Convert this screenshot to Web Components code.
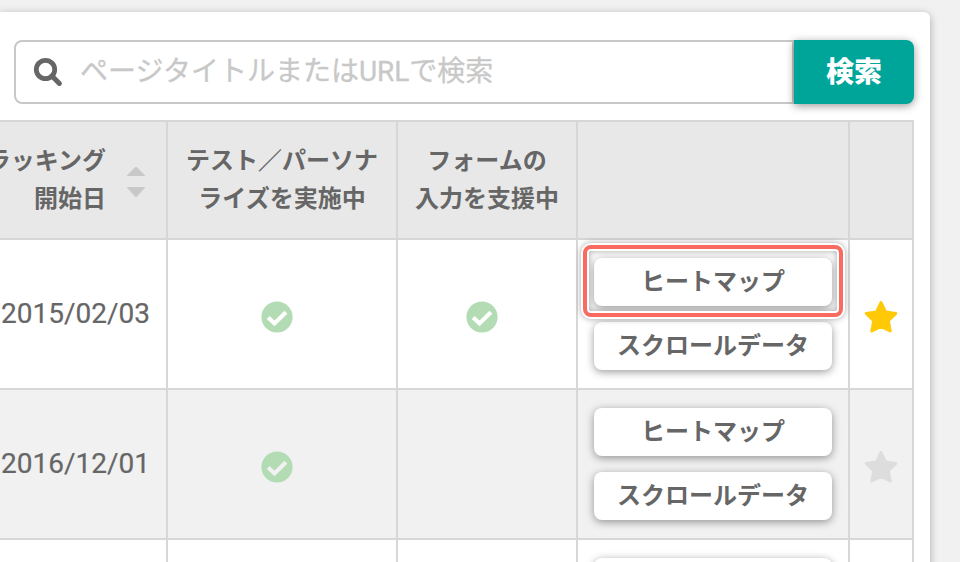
<!DOCTYPE html>
<html lang="ja">
  <head>
    <meta charset="UTF-8" />
    <title>ページ一覧</title>
    <style>
      body {
        margin: 0;
        height: 562px;
        overflow: hidden;
        background: #f1f1f1;
        color: #666;
        font-family: Roboto, "Noto Sans CJK JP", sans-serif;
      }
    </style>
    <script>
      const define = (name, html) => {
        customElements.define(
          name,
          class extends HTMLElement {
            constructor() {
              super();
              this.attachShadow({ mode: "open" }).innerHTML = html;
            }
          }
        );
      };

      define(
        "page-panel",
        `
        <style>
          :host {
            display: flex;
            flex-direction: column;
            gap: 16px;
            box-sizing: border-box;
            width: 930px;
            height: 700px;
            margin-top: 12px;
            padding: 28px 16px 0 0;
            background: #fff;
            border-radius: 0 6px 0 0;
            box-shadow: 0 2px 8px rgba(0, 0, 0, 0.3);
          }
        </style>
        <slot></slot>
        `
      );

      define(
        "search-bar",
        `
        <style>
          :host {
            display: flex;
            flex-shrink: 0;
            height: 64px;
            margin-left: 14px;
          }
          .field {
            display: flex;
            flex: 1;
            align-items: center;
            gap: 17px;
            padding-left: 17px;
            border: 2px solid #c8c8c8;
            border-radius: 8px 0 0 8px;
            color: #c8c8c8;
            font-size: 28px;
            line-height: 60px;
          }
          .field span {
            margin-top: -1px;
            -webkit-text-stroke: 0.3px;
          }
          button {
            width: 120px;
            padding: 0 0 4px;
            border: 0;
            border-radius: 0 8px 8px 0;
            background: #00a59a;
            box-shadow: 0 2px 8px rgba(0, 0, 0, 0.4);
            color: #fff;
            font: 900 28px Roboto, "Noto Sans CJK JP", sans-serif;
          }
        </style>
        <div class="field">
          <svg width="30" height="30" viewBox="0 0 30 30" fill="none" stroke="#666">
            <circle cx="12.5" cy="12.5" r="9.2" stroke-width="4.8" />
            <path d="M19 19l7.400 7.400" stroke-width="5" stroke-linecap="round" />
          </svg>
          <span><slot></slot></span>
        </div>
        <button type="button">検索</button>
        `
      );

      define(
        "page-table",
        `
        <style>
          :host {
            display: block;
            border: solid #d7d7d7;
            border-width: 2px 2px 0 0;
          }
        </style>
        <slot></slot>
        `
      );

      define(
        "table-row",
        `
        <style>
          :host {
            display: grid;
            grid-template-columns: 166px 228px 178px 270px 62px;
            column-gap: 2px;
            height: 148px;
            border-bottom: 2px solid #d7d7d7;
            background: #d7d7d7;
            --cell: #fff;
          }
          :host([striped]) {
            --cell: #f1f1f1;
          }
          :host([head]) {
            height: 116px;
            --cell: #e8e8e8;
          }
        </style>
        <slot></slot>
        `
      );

      define(
        "table-cell",
        `
        <style>
          :host {
            display: flex;
            flex-direction: column;
            align-items: center;
            justify-content: center;
            gap: 16px;
            background: var(--cell);
            font-size: 28px;
            min-width: 0;
          }
          :host([date]) {
            align-items: flex-end;
            padding-right: 16px;
          }
        </style>
        <slot></slot>
        `
      );

      define(
        "head-label",
        `
        <style>
          :host {
            display: block;
            font-size: 24px;
            font-weight: 700;
            line-height: 38px;
            text-align: center;
            white-space: nowrap;
          }
          :host([sortable]) {
            display: flex;
            align-items: center;
            gap: 20px;
            text-align: right;
            margin-right: 4px;
          }
          svg {
            display: none;
          }
          :host([sortable]) svg {
            display: block;
            margin-top: 4px;
          }
        </style>
        <div><slot></slot></div>
        <svg width="20" height="32" viewBox="0 0 20 32" fill="#c8c8c8">
          <path d="M.5 10L9 1.2q1-1 2 0L19.500 10zM.5 21h19L11 30.500q-1 1-2 0z" />
        </svg>
        `
      );

      define(
        "date-text",
        `
        <style>
          :host {
            display: block;
            line-height: 38px;
            -webkit-text-stroke: 0.2px;
          }
        </style>
        <slot></slot>
        `
      );

      define(
        "check-mark",
        `
        <style>
          :host {
            display: block;
            height: 32px;
            margin: 6px 11px 0 0;
          }
          path {
            stroke: var(--cell);
          }
        </style>
        <svg width="32" height="32" viewBox="0 0 32 32">
          <circle cx="16" cy="16" r="15.600" fill="#b3dcb5" />
          <path d="M7.200 16.400l6.300 6L24.900 11.200" fill="none" stroke-width="4.200" />
        </svg>
        `
      );

      define(
        "star-mark",
        `
        <style>
          :host {
            display: block;
            height: 34px;
            margin-top: 6px;
            color: #ddd;
          }
          :host([on]) {
            color: #ffc907;
          }
        </style>
        <svg width="34" height="34" viewBox="0 0 34 34">
          <path
            d="M17 2.600l4.500 9.300 10.300 1.500-7.500 7.300 1.900 10.300L17 26.300l-9.200 4.700 1.900-10.300-7.500-7.300 10.300-1.500z"
            fill="currentColor" stroke="currentColor" stroke-width="3" stroke-linejoin="round"
          />
        </svg>
        `
      );

      define(
        "link-button",
        `
        <style>
          :host {
            display: block;
            position: relative;
            width: 238px;
            height: 48px;
          }
          button {
            display: block;
            width: 100%;
            height: 100%;
            padding: 0 0 5px;
            border: 0;
            border-radius: 8px;
            background: #fff;
            box-shadow: 0 2px 8px rgba(0, 0, 0, 0.4);
            color: #666;
            font: 700 24px Roboto, "Noto Sans CJK JP", sans-serif;
            white-space: nowrap;
          }
          /* red frame over the button */
          :host([marked])::after {
            content: "";
            position: absolute;
            z-index: 1;
            inset: -13px -11px -11px;
            border: 4px solid #f96a61;
            border-radius: 8px;
            box-shadow: 0 0 0 2px #fff, 0 0 6px 2px rgba(0, 0, 0, 0.35),
              inset 0 0 0 2px #fff, inset 0 0 6px 2px rgba(0, 0, 0, 0.35);
          }
        </style>
        <button type="button"><slot></slot></button>
        `
      );
    </script>
  </head>
  <body>
    <page-panel>
      <search-bar>ページタイトルまたはURLで検索</search-bar>
      <page-table>
        <table-row head>
          <table-cell date><head-label sortable>トラッキング<br />開始日</head-label></table-cell>
          <table-cell><head-label>テスト／パーソナ<br />ライズを実施中</head-label></table-cell>
          <table-cell><head-label>フォームの<br />入力を支援中</head-label></table-cell>
          <table-cell></table-cell>
          <table-cell></table-cell>
        </table-row>
        <table-row>
          <table-cell date><date-text>2015/02/03</date-text></table-cell>
          <table-cell><check-mark></check-mark></table-cell>
          <table-cell><check-mark></check-mark></table-cell>
          <table-cell>
            <link-button marked>ヒートマップ</link-button>
            <link-button>スクロールデータ</link-button>
          </table-cell>
          <table-cell><star-mark on></star-mark></table-cell>
        </table-row>
        <table-row striped>
          <table-cell date><date-text>2016/12/01</date-text></table-cell>
          <table-cell><check-mark></check-mark></table-cell>
          <table-cell></table-cell>
          <table-cell>
            <link-button>ヒートマップ</link-button>
            <link-button>スクロールデータ</link-button>
          </table-cell>
          <table-cell><star-mark></star-mark></table-cell>
        </table-row>
        <table-row>
          <table-cell></table-cell>
          <table-cell></table-cell>
          <table-cell></table-cell>
          <table-cell>
            <link-button></link-button>
            <link-button></link-button>
          </table-cell>
          <table-cell></table-cell>
        </table-row>
      </page-table>
    </page-panel>
  </body>
</html>
